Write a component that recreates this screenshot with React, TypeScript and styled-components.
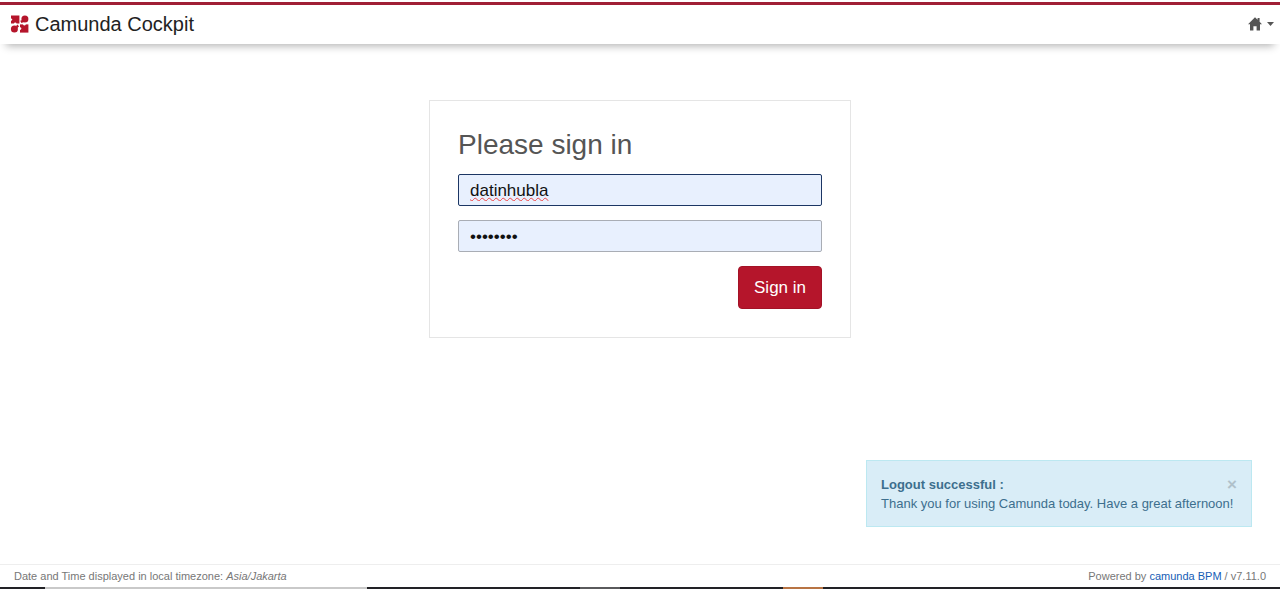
import React from "react";
import styled, { createGlobalStyle } from "styled-components";

const GlobalStyle = createGlobalStyle`
  *, *::before, *::after { box-sizing: border-box; }
  body {
    margin: 0;
    background: #fff;
    color: #555;
    font-family: "Liberation Sans", Arial, Helvetica, sans-serif;
    font-size: 13px;
  }
`;

const Page = styled.div`
  display: flex;
  flex-direction: column;
  min-height: 100vh;
`;

const Header = styled.header`
  display: flex;
  align-items: center;
  justify-content: space-between;
  height: 42px;
  margin-top: 2px;
  padding: 0 6px 2px 10px;
  border-top: 3px solid #a01f35;
  background: #fff;
  box-shadow: 0 8px 8px -6px rgba(0, 0, 0, 0.3);
`;

const Brand = styled.a`
  display: flex;
  align-items: center;
  gap: 6px;
  color: #222;
  font-size: 20px;
  line-height: 24px;
  text-decoration: none;
`;

const MenuButton = styled.button`
  display: flex;
  align-items: center;
  gap: 5px;
  padding: 0;
  border: 0;
  background: none;
  color: #555;
`;

const Main = styled.main`
  display: flex;
  flex: 1;
  flex-direction: column;
  align-items: center;
  justify-content: space-between;
  padding: 56px 28px 37px;
`;

const SignInForm = styled.form`
  display: flex;
  flex-direction: column;
  gap: 14px;
  width: 100%;
  max-width: 422px;
  padding: 28px;
  border: 1px solid #e5e5e5;
`;

const FormTitle = styled.h1`
  margin: 0;
  color: #555;
  font-size: 28px;
  font-weight: 400;
  line-height: 31px;
`;

const Field = styled.input<{ $active?: boolean }>`
  width: 100%;
  height: 32px;
  padding: 1px 11px 0;
  border: 1px solid ${(p) => (p.$active ? "#1c3664" : "#a9adb5")};
  border-radius: 2px;
  outline: none;
  background: #e8f0fe;
  color: #111;
  font-family: inherit;
  font-size: 17px;
  text-decoration: ${(p) => (p.$active ? "underline wavy #ee4444 1px" : "none")};
  text-decoration-skip-ink: none;
  text-underline-offset: 1px;
`;

const SubmitButton = styled.button`
  align-self: flex-end;
  height: 43px;
  padding: 0 15px;
  border: 1px solid #a31226;
  border-radius: 4px;
  background: #b5152b;
  color: #fff;
  font-family: inherit;
  font-size: 17px;
`;

const Alert = styled.section`
  align-self: flex-end;
  min-width: 386px;
  padding: 14px 14px 13px;
  border: 1px solid #bce8f1;
  background: #d9edf7;
  color: #3d6f8e;
  line-height: 19px;
`;

const AlertHead = styled.div`
  display: flex;
  align-items: center;
  justify-content: space-between;
`;

const CloseButton = styled.button`
  padding: 0;
  border: 0;
  background: none;
  color: #b0c1ca;
  font-family: inherit;
  font-size: 17px;
  font-weight: 700;
  line-height: 19px;
`;

const AlertText = styled.p`
  margin: 0;
`;

const Footer = styled.footer`
  display: flex;
  justify-content: space-between;
  padding: 2px 14px;
  border-top: 1px solid #eee;
  color: #777;
  font-size: 11px;
  line-height: 18px;
`;

const FooterLink = styled.a`
  color: #155cb5;
  text-decoration: none;
`;

const Strip = styled.div`
  display: flex;
  height: 2px;
  background: #222226;
`;

const Segment = styled.span<{ $width: number; $color: string }>`
  flex: ${(p) => p.$width} 1 0;
  background: ${(p) => p.$color};
`;

const segments = [
  { width: 45, color: "#222226" },
  { width: 322, color: "#c9c9c9" },
  { width: 213, color: "#222226" },
  { width: 40, color: "#5a5a5c" },
  { width: 163, color: "#222226" },
  { width: 40, color: "#b87444" },
  { width: 457, color: "#222226" },
];

const Logo = () => (
  <svg width="19" height="18" viewBox="0 0 19 18" aria-hidden="true">
    <rect x="1" y="0.5" width="8.4" height="8" fill="#b5152b" />
    <rect x="10" y="9.4" width="8.4" height="8.2" fill="#b5152b" />
    <circle cx="1" cy="4.6" r="1.2" fill="#fff" />
    <circle cx="5.2" cy="8.6" r="1.2" fill="#fff" />
    <circle cx="10" cy="13.6" r="1.3" fill="#fff" />
    <circle cx="14.4" cy="9.2" r="1.2" fill="#fff" />
    <g fill="#b5152b">
      <circle cx="14.9" cy="4" r="3.5" />
      <path d="M10.2 5.8L12.4 5L13.4 7.2L11.4 8Z" />
      <circle cx="4.4" cy="14" r="3.5" />
      <path d="M6 11L7.6 9.6L9 11.4L7.2 13Z" />
    </g>
  </svg>
);

const HomeIcon = () => (
  <svg width="14" height="14" viewBox="0 0 14 14" aria-hidden="true">
    <path
      fill="#555"
      d="M7 0.2L9.6 2.8V1H11.6V4.8L14 7.3H12V13.5H8.6V9.2H5.4V13.5H2V7.3H0Z"
    />
  </svg>
);

const Caret = () => (
  <svg width="7" height="4" viewBox="0 0 7 4" aria-hidden="true">
    <path fill="#555" d="M0 0H7L3.5 4Z" />
  </svg>
);

export default function App() {
  return (
    <>
      <GlobalStyle />
      <Page>
        <Header>
          <Brand href="#">
            <Logo />
            Camunda Cockpit
          </Brand>
          <MenuButton type="button" aria-label="Applications">
            <HomeIcon />
            <Caret />
          </MenuButton>
        </Header>
        <Main>
          <SignInForm onSubmit={(e) => e.preventDefault()}>
            <FormTitle>Please sign in</FormTitle>
            <Field
              $active
              type="text"
              aria-label="Username"
              defaultValue="datinhubla"
            />
            <Field type="password" aria-label="Password" defaultValue="password" />
            <SubmitButton type="submit">Sign in</SubmitButton>
          </SignInForm>
          <Alert role="status">
            <AlertHead>
              <strong>Logout successful :</strong>
              <CloseButton type="button" aria-label="Close">
                ×
              </CloseButton>
            </AlertHead>
            <AlertText>
              Thank you for using Camunda today. Have a great afternoon!
            </AlertText>
          </Alert>
        </Main>
        <Footer>
          <span>
            Date and Time displayed in local timezone: <em>Asia/Jakarta</em>
          </span>
          <span>
            Powered by <FooterLink href="#">camunda BPM</FooterLink> / v7.11.0
          </span>
        </Footer>
        <Strip>
          {segments.map((s, i) => (
            <Segment key={i} $width={s.width} $color={s.color} />
          ))}
        </Strip>
      </Page>
    </>
  );
}
